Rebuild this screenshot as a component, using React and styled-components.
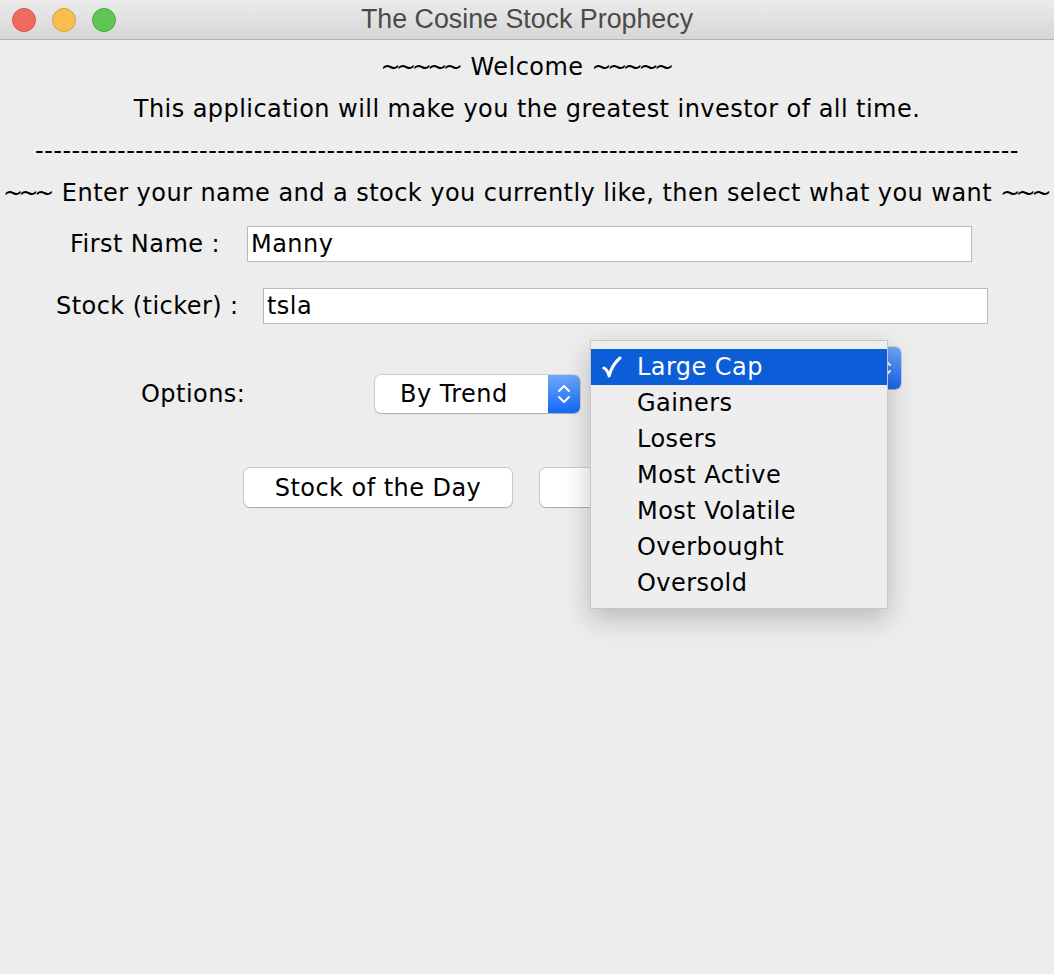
import React from "react";
import styled, { createGlobalStyle } from "styled-components";

const Global = createGlobalStyle`
  html, body {
    margin: 0;
    padding: 0;
    background: #ececec;
  }
  body {
    font-family: "DejaVu Sans", "Liberation Sans", sans-serif;
    color: #000;
  }
`;

const Window = styled.div`
  width: 1054px;
  height: 974px;
  background: #ededed;
  position: relative;
  overflow: hidden;
`;

const TitleBar = styled.div`
  height: 39px;
  border-bottom: 1px solid #b4b4b4;
  background: linear-gradient(#ebebeb, #d6d6d6);
  display: flex;
  align-items: center;
  position: relative;
`;

const Lights = styled.div`
  display: flex;
  gap: 16px;
  padding-left: 12px;
`;

const Light = styled.span`
  width: 22px;
  height: 22px;
  border-radius: 50%;
  background: ${(p) => p.color};
  border: 1px solid ${(p) => p.edge};
`;

const Title = styled.div`
  position: absolute;
  left: 0;
  right: 0;
  text-align: center;
  font-family: "Liberation Sans", Arial, sans-serif;
  font-size: 26.8px;
  color: #4a4a4a;
  pointer-events: none;
`;

const Content = styled.div`
  padding-top: 6px;
  font-size: 24px;
  letter-spacing: 0.45px;
`;

const Line = styled.div`
  text-align: center;
  line-height: 42px;
  white-space: nowrap;
`;

const Tildes = styled.span`
  letter-spacing: -4.5px;
  margin-right: 4px;
`;

const Dashes = styled.div`
  text-align: center;
  line-height: 42px;
  white-space: nowrap;
  overflow: hidden;
`;

const FormRow = styled.div`
  display: flex;
  align-items: center;
  height: 36px;
  padding-left: ${(p) => p.indent}px;
  margin-top: ${(p) => p.top}px;
`;

const Label = styled.span`
  width: ${(p) => p.w}px;
  white-space: nowrap;
`;

const TextBox = styled.div`
  width: 725px;
  height: 36px;
  box-sizing: border-box;
  background: #fff;
  border: 1px solid #b9b9b9;
  line-height: 34px;
  padding-left: 3px;
`;

const OptionsRow = styled.div`
  display: flex;
  align-items: center;
  margin-top: 51px;
  height: 38px;
`;

const OptLabel = styled.span`
  margin-left: 141px;
  width: 234px;
`;

const Select = styled.div`
  width: ${(p) => p.w}px;
  height: ${(p) => p.h || 38}px;
  margin-left: ${(p) => p.gap || 0}px;
  align-self: ${(p) => (p.raise ? "flex-start" : "center")};
  margin-top: ${(p) => (p.raise ? -p.raise : 0)}px;
  box-sizing: border-box;
  border-radius: 6px;
  background: #fff;
  box-shadow: 0 0 0 1px rgba(0, 0, 0, 0.12), 0 1px 1px rgba(0, 0, 0, 0.18);
  display: flex;
  align-items: center;
  overflow: hidden;
`;

const SelectText = styled.span`
  flex: 1;
  padding-left: 25px;
`;

const Stepper = styled.span`
  width: 32px;
  align-self: stretch;
  background: linear-gradient(#6ea8fb, #1467f8);
  display: flex;
  align-items: center;
  justify-content: center;
`;

const ButtonRow = styled.div`
  display: flex;
  gap: 28px;
  margin-top: 55px;
  padding-left: 244px;
`;

const Button = styled.div`
  width: 268px;
  height: 39px;
  box-sizing: border-box;
  border-radius: 6px;
  background: #fff;
  box-shadow: 0 0 0 1px rgba(0, 0, 0, 0.14), 0 1px 1px rgba(0, 0, 0, 0.16);
  display: flex;
  align-items: center;
  justify-content: center;
`;

const Menu = styled.div`
  position: absolute;
  left: 590px;
  top: 340px;
  width: 298px;
  box-sizing: border-box;
  padding: 8px 0 7px;
  background: #eeeeee;
  border: 1px solid #c6c6c6;
  box-shadow: 0 10px 26px rgba(0, 0, 0, 0.22);
  font-size: 24px;
  letter-spacing: 0.45px;
`;

const MenuItem = styled.div`
  height: 36px;
  display: flex;
  align-items: center;
  background: ${(p) => (p.active ? "#0b5ed8" : "transparent")};
  color: ${(p) => (p.active ? "#fff" : "#000")};
`;

const Check = styled.span`
  width: 46px;
  padding-left: 11px;
  box-sizing: border-box;
  display: flex;
  align-items: center;
`;

const Chevrons = () => (
  <svg width="14" height="22" viewBox="0 0 14 22">
    <path d="M2 8 L7 3 L12 8 M2 14 L7 19 L12 14" fill="none" stroke="#fff" strokeWidth="2" strokeLinecap="round" strokeLinejoin="round" />
  </svg>
);

const Tick = () => (
  <svg width="20" height="22" viewBox="0 0 20 22">
    <path d="M2 12 C4 13 6 16 7 20 C9 13 13 6 18 2" fill="none" stroke="#fff" strokeWidth="3" strokeLinecap="round" strokeLinejoin="round" />
  </svg>
);

const items = ["Large Cap", "Gainers", "Losers", "Most Active", "Most Volatile", "Overbought", "Oversold"];

export default function App() {
  return (
    <>
      <Global />
      <Window>
        <TitleBar>
          <Lights>
            <Light color="#ee6a5f" edge="#d5564b" />
            <Light color="#f6be4f" edge="#d9a23c" />
            <Light color="#61c554" edge="#4aa83e" />
          </Lights>
          <Title>The Cosine Stock Prophecy</Title>
        </TitleBar>
        <Content>
          <Line><Tildes>~~~~~</Tildes> Welcome <Tildes>~~~~~</Tildes></Line>
          <Line>This application will make you the greatest investor of all time.</Line>
          <Dashes>{"-".repeat(108)}</Dashes>
          <Line><Tildes>~~~</Tildes> Enter your name and a stock you currently like, then select what you want <Tildes>~~~</Tildes></Line>
          <FormRow indent={70} top={12}>
            <Label w={177}>First Name :</Label>
            <TextBox>Manny</TextBox>
          </FormRow>
          <FormRow indent={56} top={26}>
            <Label w={207}>Stock (ticker) :</Label>
            <TextBox>tsla</TextBox>
          </FormRow>
          <OptionsRow>
            <OptLabel>Options:</OptLabel>
            <Select w={205}>
              <SelectText>By Trend</SelectText>
              <Stepper><Chevrons /></Stepper>
            </Select>
            <Select w={296} h={42} gap={25} raise={28}>
              <SelectText />
              <Stepper><Chevrons /></Stepper>
            </Select>
          </OptionsRow>
          <ButtonRow>
            <Button>Stock of the Day</Button>
            <Button />
          </ButtonRow>
        </Content>
        <Menu>
          {items.map((it, i) => (
            <MenuItem key={it} active={i === 0}>
              <Check>{i === 0 ? <Tick /> : null}</Check>
              {it}
            </MenuItem>
          ))}
        </Menu>
      </Window>
    </>
  );
}
